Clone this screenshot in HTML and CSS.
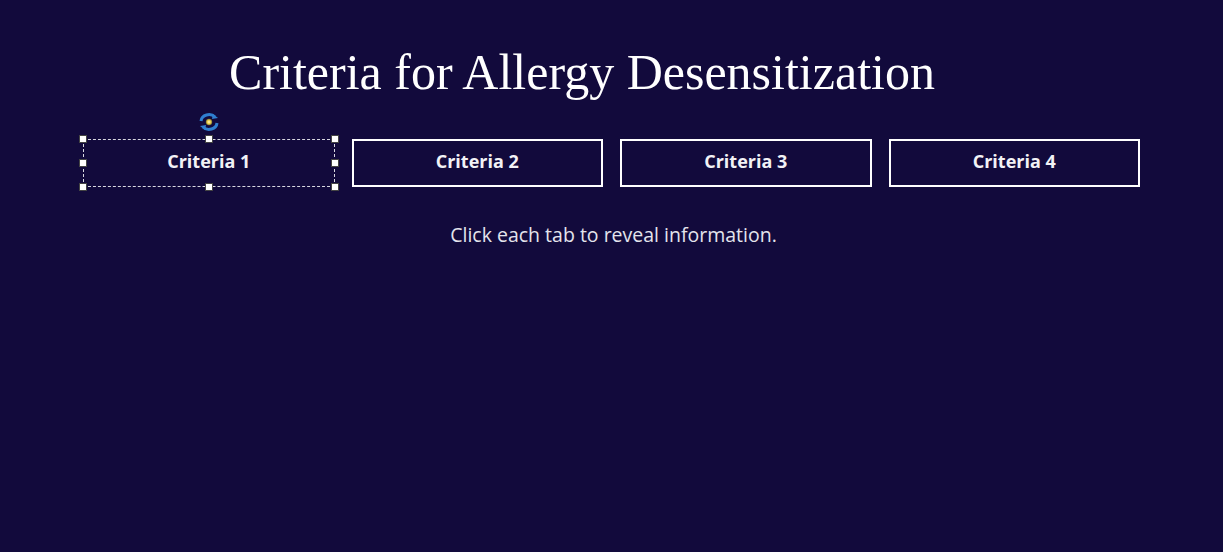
FILE: index.html
```html
<!DOCTYPE html>
<html>
<head>
<meta charset="utf-8">
<link rel="stylesheet" href="styles.css">
</head>
<body>
<main class="slide">
  <h1 class="title">Criteria for Allergy Desensitization</h1>
  <div class="tabs">
    <div class="tab selected">
      <svg class="rotate" width="26" height="20" viewBox="0 0 26 20">
        <defs>
          <radialGradient id="dot" cx="50%" cy="50%" r="50%">
            <stop offset="0%" stop-color="#fff8c0"/>
            <stop offset="60%" stop-color="#e8c840"/>
            <stop offset="100%" stop-color="#6a6a3a"/>
          </radialGradient>
        </defs>
        <path d="M5 9 A8 7 0 0 1 19 5" fill="none" stroke="#2f7fd0" stroke-width="3"/>
        <path d="M21 11 A8 7 0 0 1 7 15" fill="none" stroke="#2f7fd0" stroke-width="3"/>
        <path d="M17 2 L22 6 L16 7 Z" fill="#2f7fd0"/>
        <path d="M9 18 L4 14 L10 13 Z" fill="#2f7fd0"/>
        <circle cx="13" cy="10" r="3.2" fill="url(#dot)"/>
      </svg>
      <span class="handle h-tl"></span><span class="handle h-tm"></span><span class="handle h-tr"></span>
      <span class="handle h-ml"></span><span class="handle h-mr"></span>
      <span class="handle h-bl"></span><span class="handle h-bm"></span><span class="handle h-br"></span>
      <span class="label">Criteria 1</span>
    </div>
    <div class="tab"><span class="label">Criteria 2</span></div>
    <div class="tab"><span class="label">Criteria 3</span></div>
    <div class="tab"><span class="label">Criteria 4</span></div>
  </div>
  <p class="hint">Click each tab to reveal information.</p>
</main>
</body>
</html>
```
FILE: styles.css
```css
html, body {
  margin: 0;
  padding: 0;
  background: #120a3c;
  width: 1223px;
  height: 552px;
  overflow: hidden;
}
.slide {
  display: flex;
  flex-direction: column;
  align-items: center;
}
.title {
  margin: 42px 0 0 -59px;
  font-family: "Liberation Serif", serif;
  font-weight: normal;
  font-size: 50px;
  line-height: 60px;
  color: #ffffff;
}
.tabs {
  margin-top: 37px;
  display: flex;
  gap: 17px;
  width: 1057px;
}
.tab {
  position: relative;
  box-sizing: border-box;
  width: 252px;
  height: 48px;
  border: 2px solid #ffffff;
  display: flex;
  align-items: center;
  justify-content: center;
}
.tab.selected {
  border: 1px dashed #d8d8e0;
}
.label {
  font-family: "Open Sans", "Noto Sans", sans-serif;
  font-weight: 700;
  font-size: 18px;
  color: #f2f2f6;
  margin-top: -4px;
}
.handle {
  position: absolute;
  width: 6px;
  height: 6px;
  background: #ffffff;
  border: 1px solid #444;
}
.h-tl { left: -5px; top: -5px; }
.h-tm { left: calc(50% - 4px); top: -5px; }
.h-tr { right: -5px; top: -5px; }
.h-ml { left: -5px; top: calc(50% - 4px); }
.h-mr { right: -5px; top: calc(50% - 4px); }
.h-bl { left: -5px; bottom: -5px; }
.h-bm { left: calc(50% - 4px); bottom: -5px; }
.h-br { right: -5px; bottom: -5px; }
.rotate {
  position: absolute;
  left: calc(50% - 13px);
  top: -28px;
}
.hint {
  margin: 34px 0 0 4px;
  font-family: "Open Sans", "Noto Sans", sans-serif;
  font-size: 19.5px;
  color: #e4e4ec;
}
```
